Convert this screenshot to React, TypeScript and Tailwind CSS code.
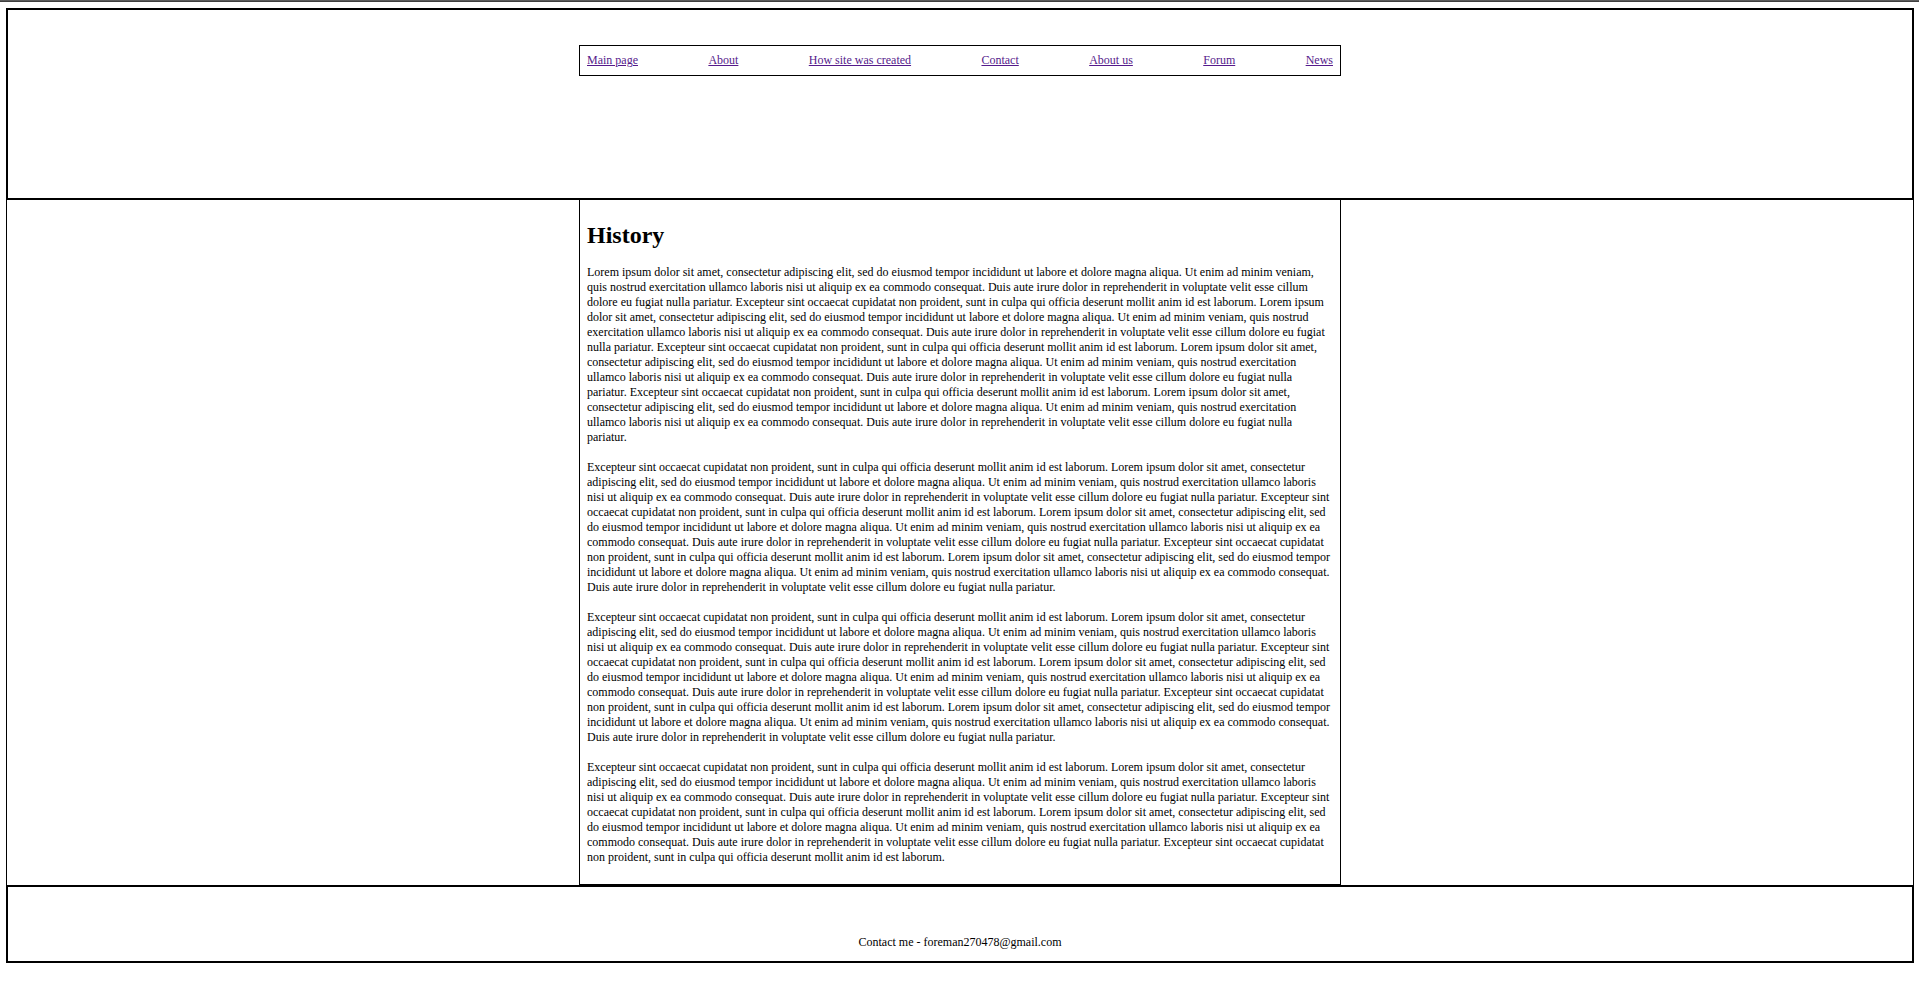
import React from "react";

const LOREM =
  "Lorem ipsum dolor sit amet, consectetur adipiscing elit, sed do eiusmod tempor incididunt ut labore et dolore magna aliqua. Ut enim ad minim veniam, quis nostrud exercitation ullamco laboris nisi ut aliquip ex ea commodo consequat. Duis aute irure dolor in reprehenderit in voluptate velit esse cillum dolore eu fugiat nulla pariatur.";
const EXC =
  "Excepteur sint occaecat cupidatat non proident, sunt in culpa qui officia deserunt mollit anim id est laborum.";

const paragraphs = [
  [LOREM, EXC, LOREM, EXC, LOREM, EXC, LOREM].join(" "),
  [EXC, LOREM, EXC, LOREM, EXC, LOREM].join(" "),
  [EXC, LOREM, EXC, LOREM, EXC, LOREM].join(" "),
  [EXC, LOREM, EXC, LOREM, EXC].join(" "),
];

const links = ["Main page", "About", "How site was created", "Contact", "About us", "Forum", "News"];

export default function App() {
  return (
    <div
      className="min-h-[997px] bg-white text-black"
      style={{ fontFamily: '"Liberation Serif", "Times New Roman", serif' }}
    >
      <div className="h-[2px] bg-gradient-to-b from-[#6a6a6a] to-[#333333]" />
      <div className="ml-[6px] mt-[6px] w-[1908px]">
        <header className="h-[192px] border-2 border-black">
          <nav className="mx-auto mt-[35px] flex h-[31px] w-[762px] items-start justify-between border border-black px-[7px] pt-[7px] text-[12px] leading-[15px]">
            {links.map((l) => (
              <a key={l} href="#" className="text-[#551a8b] underline">
                {l}
              </a>
            ))}
          </nav>
        </header>
        <div className="flex justify-center border-x border-black">
          <main className="w-[762px] border-x border-b border-black px-[7px] pb-[19px]">
            <h2 className="mt-[21px] mb-[16px] text-[24px] font-bold leading-[28px]">History</h2>
            <div className="flex flex-col gap-[15px]">
              {paragraphs.map((p, i) => (
                <p key={i} className="text-[12px] leading-[15px]">
                  {p}
                </p>
              ))}
            </div>
          </main>
        </div>
        <footer className="h-[78px] border-2 border-black pt-[48px] text-center text-[12px] leading-[15px]">
          Contact me - foreman270478@gmail.com
        </footer>
      </div>
    </div>
  );
}
